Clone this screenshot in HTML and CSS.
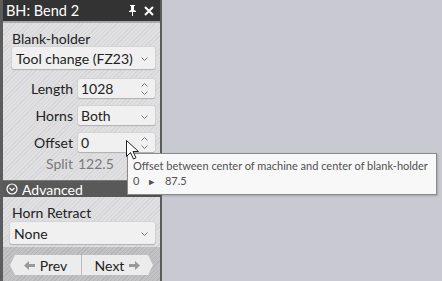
FILE: index.html
```html
<!DOCTYPE html>
<html lang="en">
<head>
    <meta charset="UTF-8">
    <title>BH: Bend 2</title>
    <link rel="stylesheet" href="styles.css">
</head>
<body>
    <div class="panel">
        <div class="titlebar">
            <span class="title">BH: Bend 2</span>
            <span class="title-icons">
                <svg width="9" height="11" viewBox="0 0 9 11"><path d="M2 0h5v1H6v4l2 1v1H5v4H4V7H1V6l2-1V1H2z" fill="#fff"/></svg>
                <svg width="10" height="10" viewBox="0 0 10 10"><path d="M1 1l8 8M9 1l-8 8" stroke="#fff" stroke-width="2"/></svg>
            </span>
        </div>
        <div class="body">
            <div class="section">
                <div class="caption">Blank-holder</div>
                <div class="select">
                    <span>Tool change (FZ23)</span>
                    <svg class="chev" width="7" height="4" viewBox="0 0 7 4"><path d="M0.5 0.5l3 3 3-3" fill="none" stroke="#777"/></svg>
                </div>
                <div class="form">
                    <label>Length</label>
                    <div class="field">
                        <span>1028</span>
                        <svg class="spin" width="7" height="12" viewBox="0 0 7 12"><path d="M0.5 3.5l3-3 3 3M0.5 8.5l3 3 3-3" fill="none" stroke="#777"/></svg>
                    </div>
                    <label>Horns</label>
                    <div class="field">
                        <span>Both</span>
                        <svg class="chev" width="7" height="4" viewBox="0 0 7 4"><path d="M0.5 0.5l3 3 3-3" fill="none" stroke="#777"/></svg>
                    </div>
                    <label>Offset</label>
                    <div class="field">
                        <span>0</span>
                        <svg class="spin" width="7" height="12" viewBox="0 0 7 12"><path d="M0.5 3.5l3-3 3 3M0.5 8.5l3 3 3-3" fill="none" stroke="#777"/></svg>
                    </div>
                </div>
                <div class="split">
                    <span class="split-label">Split</span>
                    <span>122.5</span>
                </div>
            </div>
            <div class="adv-header">
                <svg width="12" height="12" viewBox="0 0 12 12"><circle cx="6" cy="6" r="5" fill="none" stroke="#fff" stroke-width="1.2"/><path d="M3.5 5l2.5 2.5L8.5 5" fill="none" stroke="#fff" stroke-width="1.2"/></svg>
                <span>Advanced</span>
            </div>
            <div class="section adv">
                <div class="caption">Horn Retract</div>
                <div class="select">
                    <span>None</span>
                    <svg class="chev" width="7" height="4" viewBox="0 0 7 4"><path d="M0.5 0.5l3 3 3-3" fill="none" stroke="#777"/></svg>
                </div>
            </div>
            <div class="nav">
                <div class="nav-btn prev">
                    <svg width="11" height="9" viewBox="0 0 11 9"><path d="M0 4.5L5 0v3h6v3H5v3z" fill="#999"/></svg>
                    <span>Prev</span>
                </div>
                <div class="nav-btn next">
                    <span>Next</span>
                    <svg width="11" height="9" viewBox="0 0 11 9"><path d="M11 4.5L6 0v3H0v3h6v3z" fill="#999"/></svg>
                </div>
            </div>
        </div>
    </div>

    <div class="tooltip">
        <div>Offset between center of machine and center of blank-holder</div>
        <div>0 <span class="arrow">&#9658;</span> 87.5</div>
    </div>

    <svg class="cursor" width="13" height="20" viewBox="0 0 13 20">
        <path d="M0.5 0.5v16l4-4 3 6.5 2.5-1.2-3-6.3h5.5z" fill="#fff" stroke="#222" stroke-width="1"/>
    </svg>
</body>
</html>
```

FILE: styles.css
```css
body {
    margin: 0;
    width: 442px;
    height: 281px;
    overflow: hidden;
    background: #c9c9d1;
    font-family: Lato, "Open Sans", sans-serif;
    position: relative;
}
.panel {
    width: 157px;
    height: 281px;
    border-left: 3px solid #5c5c5c;
    border-right: 2px solid #5c5c5c;
    display: flex;
    flex-direction: column;
}
.titlebar {
    height: 21px;
    flex-shrink: 0;
    background: #333333;
    color: #fff;
    display: flex;
    align-items: center;
    justify-content: space-between;
    padding: 0 6px 0 3px;
    border-bottom: 2px solid #a9a9ad;
}
.title {
    font-size: 14.5px;
}
.title-icons {
    display: flex;
    gap: 7px;
    align-items: center;
}
.body {
    flex: 1;
    display: flex;
    flex-direction: column;
    background: repeating-linear-gradient(-45deg, #e0e0e2 0 2px, #d6d6d8 2px 3px);
}
.section {
    padding: 7px 5px 0 9px;
}
.caption {
    font-size: 14px;
    color: #222;
    height: 17px;
    line-height: 17px;
}
.select, .field {
    background: #f0f0f0;
    border-radius: 2px;
    box-shadow: 0 1px 1px #b0b0b0, 0 0 0 1px #d4d4d4;
    height: 19px;
    display: flex;
    align-items: center;
    justify-content: space-between;
    padding: 0 7px 0 3px;
    font-size: 14px;
    color: #222;
}
.select {
    height: 22px;
    padding-left: 4px;
}
.chev {
    margin-top: 2px;
}
.form {
    display: grid;
    grid-template-columns: 61px 77px;
    column-gap: 5px;
    row-gap: 8px;
    margin-top: 10px;
    align-items: center;
}
.form label {
    text-align: right;
    font-size: 14px;
    color: #222;
}
.split {
    margin-top: 4px;
    height: 16px;
    line-height: 16px;
    font-size: 14px;
    color: #7a7a7a;
    display: flex;
}
.split-label {
    width: 61px;
    text-align: right;
    margin-right: 5px;
}
.adv-header {
    margin-top: 8px;
    height: 16px;
    flex-shrink: 0;
    background: #595959;
    border-top: 1px solid #777;
    color: #fff;
    display: flex;
    align-items: center;
    gap: 4px;
    padding-left: 3px;
    font-size: 14px;
}
.section.adv {
    padding: 7px 5px 3px 7px;
}
.section.adv .caption {
    padding-left: 2px;
}
.section.adv .select {
    margin-top: 1px;
}
.nav {
    flex: 1;
    background: repeating-linear-gradient(-45deg, #c2c2c4 0 2px, #b6b6b8 2px 3px);
    padding: 8px 7px 0 7px;
    display: flex;
    align-items: flex-start;
}
.nav-btn {
    height: 20px;
    background: #ececec;
    display: flex;
    align-items: center;
    justify-content: center;
    gap: 5px;
    font-size: 14px;
    color: #222;
}
.prev {
    width: 72px;
    clip-path: polygon(5px 0, 100% 0, 100% 100%, 5px 100%, 0 50%);
    border-right: 1px solid #bbb;
}
.next {
    width: 72px;
    clip-path: polygon(0 0, calc(100% - 5px) 0, 100% 50%, calc(100% - 5px) 100%, 0 100%);
}
.tooltip {
    position: absolute;
    left: 127px;
    top: 153px;
    width: 298px;
    padding: 4px 5px 5px 5px;
    background: #f8f8f8;
    border: 1px solid #8a8a8a;
    box-shadow: 1px 1px 2px rgba(0, 0, 0, 0.2);
    color: #505050;
    font-size: 11px;
    line-height: 15px;
    white-space: nowrap;
}
.arrow {
    font-size: 9px;
    margin: 0 6px 0 5px;
}
.cursor {
    position: absolute;
    left: 126px;
    top: 140px;
}
```
